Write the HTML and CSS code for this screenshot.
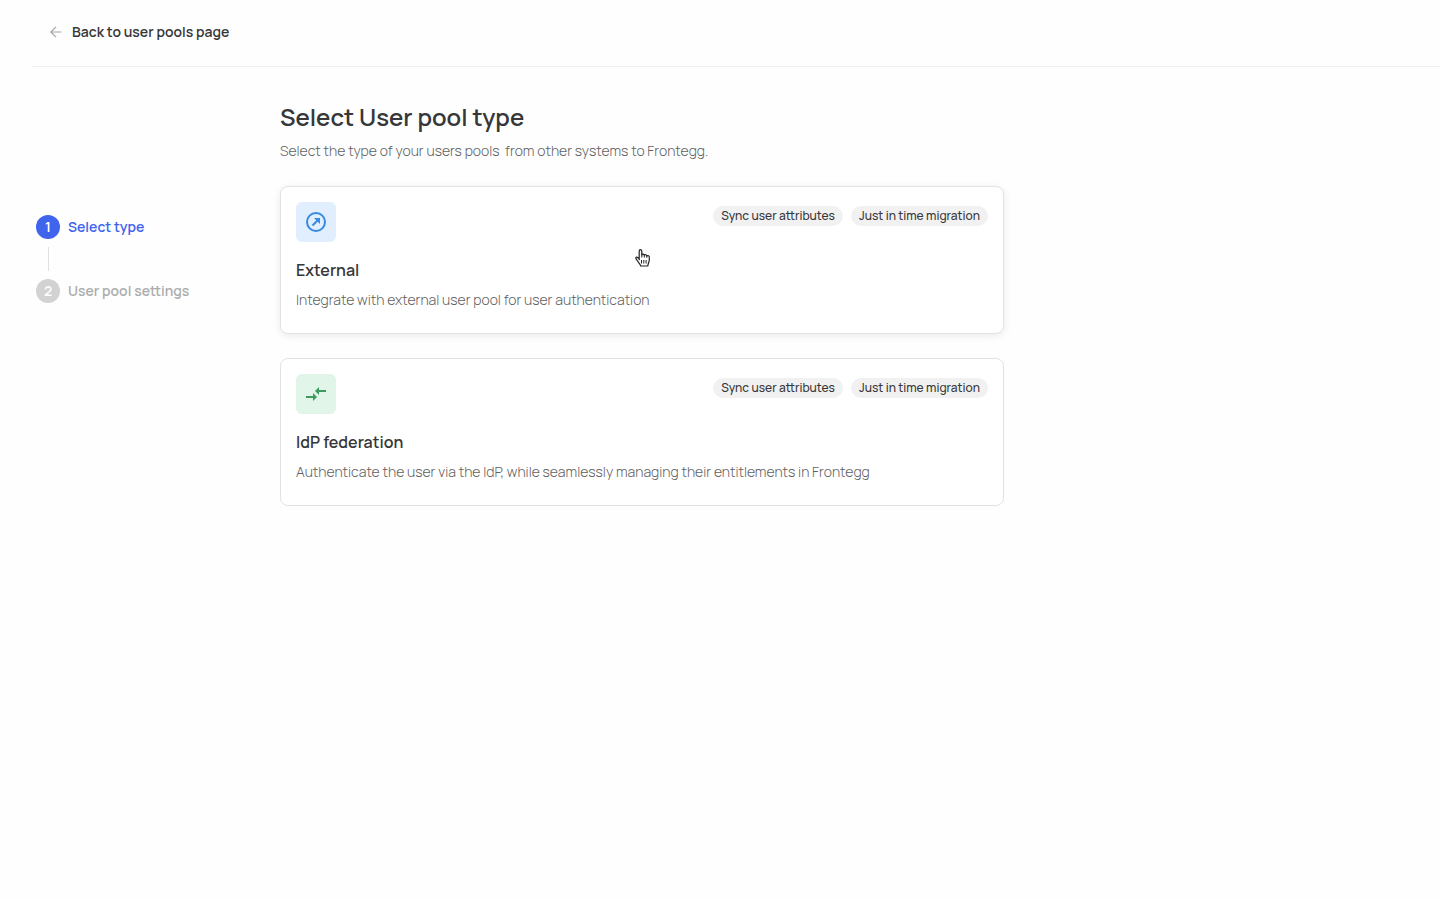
FILE: index.html
```html
<!DOCTYPE html>
<html lang="en">
<head>
  <meta charset="UTF-8" />
  <meta name="viewport" content="width=device-width, initial-scale=1.0"/>
  <title>Select User pool type</title>
  <link rel="stylesheet" href="styles.css">
</head>
<body>
  <header class="topbar">
    <a href="#" class="back">
      <svg width="16" height="16" viewBox="0 0 16 16" fill="none" stroke="#a6a6a6" stroke-width="1.2">
        <path d="M13.5 8H3M8 2.8L2.8 8L8 13.2"/>
      </svg>
      Back to user pools page
    </a>
  </header>

  <div class="page">
    <ol class="steps">
      <li class="step active"><span class="number">1</span>Select type</li>
      <li class="step"><span class="number">2</span>User pool settings</li>
    </ol>

    <main class="content">
      <h1>Select User pool type</h1>
      <p class="subtitle">Select the type of your users pools&nbsp; from other systems to Frontegg.</p>

      <button type="button" class="card hovered">
        <span class="card-top">
          <span class="icon blue">
            <svg width="24" height="24" viewBox="0 0 24 24" fill="none" stroke="#368ae0" stroke-width="2">
              <circle cx="12" cy="12" r="9"/>
              <path d="M8.5 15.5L13.5 10.5"/>
              <path d="M10 8H16V14Z" fill="#368ae0" stroke="none"/>
            </svg>
          </span>
          <span class="tags">
            <span class="tag">Sync user attributes</span>
            <span class="tag">Just in time migration</span>
          </span>
        </span>
        <span class="card-title">External</span>
        <span class="card-text">Integrate with external user pool for user authentication</span>
        <svg class="pointer" width="18" height="20" viewBox="0 0 18 20">
          <path d="M5.2 12.2V3.2C5.2 1 7.6 1 7.8 3.2V6.8C8.4 5.9 10 6 10.3 7.2C11 6.3 12.6 6.6 12.8 7.9C13.8 7.2 15.4 7.8 15.3 9.3V12C15.3 13.6 14 15.4 13.8 18H6.8C6.4 16.3 4.4 14.3 3.2 12.5C2.4 11.3 1.4 10.4 1.9 9.6C2.5 8.7 4.1 9.4 5.2 10.9" fill="#fff" stroke="#222" stroke-width="1.2" stroke-linejoin="round"/>
          <path d="M7.8 6.5V9.5M10.3 7V9.5M12.8 7.7V9.8M7.5 12V15.5M9.8 12V15.5M12.1 12V15.5" fill="none" stroke="#222"/>
        </svg>
      </button>

      <button type="button" class="card">
        <span class="card-top">
          <span class="icon green">
            <svg width="24" height="24" viewBox="0 0 24 24" fill="#3c9b5d">
              <path d="M9 14H2V16H9V19L13 15L9 11ZM15 13V10H22V8H15V5L11 9Z"/>
            </svg>
          </span>
          <span class="tags">
            <span class="tag">Sync user attributes</span>
            <span class="tag">Just in time migration</span>
          </span>
        </span>
        <span class="card-title">IdP federation</span>
        <span class="card-text">Authenticate the user via the IdP, while seamlessly managing their entitlements in Frontegg</span>
      </button>
    </main>
  </div>
</body>
</html>
```
FILE: styles.css
```css
* {
  margin: 0;
  padding: 0;
  box-sizing: border-box;
}

body {
  font-family: Manrope, Inter, sans-serif;
  font-size: 14px;
  line-height: 24px;
  color: #373739;
  background-color: #fefefe;
}

.topbar {
  margin-left: 32px;
  padding: 20px 16px 19px;
  border-bottom: 1px solid #f0f0f0;
}

.back {
  display: inline-flex;
  align-items: center;
  gap: 8px;
  height: 24px;
  color: #373739;
  font-weight: 600;
  text-decoration: none;
}

.page {
  display: flex;
  align-items: flex-start;
  padding: 32px 36px;
}

.steps {
  width: 244px;
  flex-shrink: 0;
  padding-top: 116px;
  list-style: none;
}

.step {
  display: flex;
  align-items: center;
  gap: 8px;
  color: #adadad;
  font-weight: 600;
}

.step.active {
  color: #4064ed;
}

.step + .step::before {
  content: "";
  width: 1px;
  height: 24px;
  background-color: #e0e0e0;
}

.step + .step {
  flex-wrap: wrap;
}

.step + .step::before {
  margin: 0 calc(100% - 13px) 0 12px;
}

.step + .step {
  margin-top: 8px;
}

.number {
  width: 24px;
  height: 24px;
  border-radius: 50%;
  background-color: #d2d2d2;
  color: #ffffff;
  text-align: center;
}

.active .number {
  background-color: #4064ed;
}

.content {
  flex: 1;
  max-width: 724px;
}

h1 {
  font-size: 24px;
  line-height: 36px;
  font-weight: 600;
}

.subtitle {
  margin: 4px 0 23px;
  font-weight: 300;
  color: #616161;
}

.card {
  position: relative;
  display: flex;
  flex-direction: column;
  width: 100%;
  margin-bottom: 24px;
  padding: 15px 15px 21px;
  border: 1px solid #e2e2e2;
  border-radius: 8px;
  background-color: #ffffff;
  color: #373739;
  font: inherit;
  text-align: left;
  cursor: pointer;
}

.card.hovered {
  box-shadow: 0 2px 8px rgba(0, 0, 0, 0.08);
}

.card-top {
  display: flex;
  justify-content: space-between;
  align-items: flex-start;
}

.icon {
  display: flex;
  align-items: center;
  justify-content: center;
  width: 40px;
  height: 40px;
  border-radius: 6px;
}

.icon.blue {
  background-color: #e1eefe;
}

.icon.green {
  background-color: #e1f5e8;
}

.tags {
  display: flex;
  gap: 8px;
  padding-top: 4px;
}

.tag {
  padding: 0 8px;
  border-radius: 10px;
  background-color: #f1f1f1;
  font-size: 12px;
  line-height: 20px;
  font-weight: 500;
}

.card-title {
  margin: 16px 0 6px;
  font-size: 16px;
  font-weight: 600;
}

.card-text {
  font-weight: 300;
  color: #616161;
}

.pointer {
  position: absolute;
  top: 61px;
  left: 353px;
}
```
